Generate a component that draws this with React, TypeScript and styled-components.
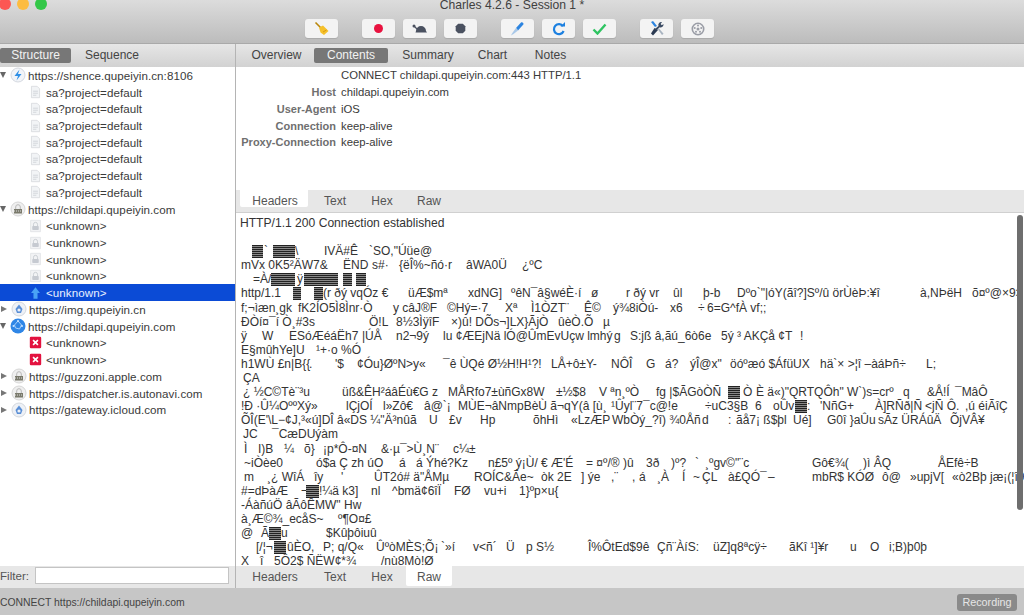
import React from "react";
import styled, { createGlobalStyle } from "styled-components";

const Global = createGlobalStyle`
  html, body { margin: 0; padding: 0; overflow: hidden; background: #fff; }
  body { font-family: "Liberation Sans", Arial, sans-serif; color: #333; }
  * { box-sizing: border-box; }
`;

const Page = styled.div`
  width: 1024px;
  height: 615px;
  display: flex;
  flex-direction: column;
  overflow: hidden;
`;
const Header = styled.header`
  height: 44px;
  flex: none;
  background: linear-gradient(#dcdcdc, #bcbcbc);
  border-bottom: 1px solid #a9a9a9;
  display: flex;
  flex-direction: column;
`;
const TitleRow = styled.div`
  height: 19px;
  display: grid;
  grid-template-columns: 1fr auto 1fr;
`;
const Lights = styled.div`
  display: flex;
  gap: 6px;
  margin: -2px 0 0 -1px;
`;
const Light = styled.span<{ $c: string }>`
  width: 12px;
  height: 12px;
  border-radius: 50%;
  background: ${(p) => p.$c};
`;
const Title = styled.div`
  font-size: 12.15px;
  line-height: 11px;
  color: #404040;
`;
const Toolbar = styled.div`
  display: flex;
  gap: 24px;
  padding-left: 305px;
`;
const ToolGroup = styled.div`
  display: flex;
  gap: 8px;
`;
const ToolButton = styled.div`
  width: 33px;
  height: 19px;
  border-radius: 3px;
  background: #f3f3f3;
  box-shadow: 0 1px 1px #aaa;
  display: flex;
  align-items: center;
  justify-content: center;
`;
const Main = styled.div`
  height: 544px;
  flex: none;
  display: flex;
`;
const LeftPane = styled.aside`
  width: 236px;
  flex: none;
  border-right: 1px solid #b4b4b4;
  display: flex;
  flex-direction: column;
`;
const RightPane = styled.section`
  flex: 1;
  min-width: 0;
  display: flex;
  flex-direction: column;
`;
const TabBar = styled.nav<{ $pad?: number }>`
  height: 23px;
  flex: none;
  background: linear-gradient(#e6e6e6, #d2d2d2);
  display: flex;
  align-items: flex-start;
  padding-left: ${(p) => p.$pad ?? 0}px;
  font-size: 12px;
`;
const Tab = styled.span<{ $w: number; $on?: boolean }>`
  width: ${(p) => p.$w}px;
  height: 15px;
  line-height: 15px;
  margin-top: 4px;
  text-align: center;
  border-radius: 2px;
  color: ${(p) => (p.$on ? "#f2f2f2" : "#444")};
  background: ${(p) => (p.$on ? "#777" : "transparent")};
`;
const Tree = styled.div`
  flex: 1;
  background: #fff;
  font-size: 11.6px;
  letter-spacing: 0.06px;
`;
const Row = styled.div<{ $child?: boolean; $sel?: boolean }>`
  height: 16.72px;
  display: flex;
  align-items: center;
  white-space: nowrap;
  color: ${(p) => (p.$sel ? "#e8f0ff" : "#3a3a3a")};
  background: ${(p) => (p.$sel ? "#0b4bd6" : "transparent")};
  padding-left: ${(p) => (p.$child ? 29 : 0)}px;
  gap: ${(p) => (p.$child ? 4 : 2)}px;
`;
const Arrow = styled.span<{ $open?: boolean }>`
  width: 0;
  height: 0;
  ${(p) =>
    p.$open
      ? `border-left:3.5px solid transparent;border-right:3.5px solid transparent;border-top:6px solid #666;margin-right:2px;`
      : `border-top:3.5px solid transparent;border-bottom:3.5px solid transparent;border-left:6px solid #777;margin-left:1px;margin-right:2px;`}
`;
const FilterRow = styled.div`
  height: 22px;
  flex: none;
  background: #e7e7e7;
  display: flex;
  align-items: center;
  gap: 6px;
  padding: 0 6px 4px 0;
  font-size: 11.6px;
  color: #555;
`;
const FilterInput = styled.div`
  flex: 1;
  height: 17px;
  background: #fff;
  border: 1px solid #c4c4c4;
`;
const Summary = styled.div`
  height: 123px;
  flex: none;
  padding: 0 0 0 4px;
  display: grid;
  grid-template-columns: 96px 1fr;
  grid-auto-rows: 16.72px;
  column-gap: 5px;
  align-items: center;
  font-size: 11.3px;
  color: #3a3a3a;
`;
const Key = styled.span`
  text-align: right;
  color: #6f6f6f;
  font-weight: 700;
  font-size: 11px;
  white-space: nowrap;
`;
const SubBar = styled.div`
  height: 22px;
  flex: none;
  background: #e7e7e7;
  display: flex;
  align-items: flex-start;
  padding-left: 4px;
  font-size: 12px;
  color: #555;
`;
const SubTab = styled.span<{ $w: number; $h?: number; $ml?: number; $pl?: number; $on?: boolean }>`
  width: ${(p) => p.$w}px;
  height: ${(p) => p.$h ?? 20}px;
  margin-left: ${(p) => p.$ml ?? 0}px;
  padding-left: ${(p) => p.$pl ?? 0}px;
  line-height: 22px;
  text-align: center;
  background: ${(p) => (p.$on ? "#fff" : "transparent")};
  border-radius: 0 0 2px 2px;
`;
const Body = styled.div`
  position: relative;
  flex: 1;
  min-height: 0;
  overflow: hidden;
  border-top: 1px solid #d0d0d0;
  padding-top: 3px;
  font-size: 12px;
  line-height: 14.1px;
  color: #333;
  white-space: pre;
`;
const Line = styled.div`
  height: 14.1px;
  display: flex;
`;
const Head = styled(Line)`
  font-size: 12.1px;
  padding-left: 4px;
`;
const Cell = styled.span<{ $w?: number }>`
  flex: none;
  ${(p) => (p.$w !== undefined ? `width: ${p.$w}px;` : "")}
`;
const Blot = styled.span<{ $w: number }>`
  display: block;
  width: ${(p) => p.$w}px;
  height: 13px;
  margin-top: 1px;
  background: repeating-linear-gradient(#222 0 1px, #888 1px 2px);
`;
const Thumb = styled.div`
  position: absolute;
  right: 1px;
  top: 2px;
  width: 6px;
  height: 295px;
  border-radius: 3px;
  background: #6e6e6e;
`;
const Status = styled.footer`
  flex: 1;
  background: #c6c6c6;
  display: flex;
  align-items: center;
  justify-content: space-between;
  padding: 1px 7px 0 0;
  font-size: 10.4px;
  color: #444;
`;
const Recording = styled.span`
  width: 60px;
  height: 17px;
  line-height: 17px;
  text-align: center;
  border-radius: 3px;
  background: #8a8a8a;
  color: #e6e6e6;
  font-size: 10.8px;
`;
const Svg: React.FC<{ w?: number; h?: number; children: React.ReactNode }> = ({ w = 16, h = 16, children }) => (
  <svg width={w} height={h} viewBox="0 0 16 16" style={{ flex: "none" }}>{children}</svg>
);
const Doc = () => (
  <Svg w={13} h={14}>
    <path d="M3 1h7l3 3v11H3z" fill="#f2f4f6" stroke="#d6d9dd" />
    <path d="M5 7h6M5 9.5h6M5 12h4" stroke="#cdd0d5" />
  </Svg>
);
const LockDoc = () => (
  <Svg w={13} h={14}>
    <path d="M2 1h12v14H2z" fill="#f2f3f5" stroke="#dfe1e4" />
    <path d="M5.5 8V6a2.5 2.5 0 0 1 5 0v2" fill="none" stroke="#c3c7cd" />
    <rect x="4" y="8" width="8" height="5" rx="1" fill="#c6cad1" />
  </Svg>
);
const LockGlobe = () => (
  <Svg>
    <circle cx="8" cy="8" r="7" fill="#efefef" stroke="#d6d6d6" />
    <path d="M5.7 8V6a2.3 2.3 0 0 1 4.6 0v2" fill="none" stroke="#b8b8b8" />
    <rect x="4" y="8" width="8" height="4.5" fill="#7a7a6c" />
    <path d="M4 10h8" stroke="#ddd" strokeDasharray="1 1" />
  </Svg>
);
const BlueLockGlobe = () => (
  <Svg>
    <circle cx="8" cy="8" r="7" fill="#eef1f6" stroke="#d4d8de" />
    <path d="M8 3.5 11.5 8 10 12H6L4.5 8z" fill="#5a8fd6" />
    <circle cx="8" cy="9" r="1.6" fill="#eef1f6" />
  </Svg>
);
const BoltGlobe = () => (
  <Svg>
    <circle cx="8" cy="8" r="7" fill="#f2f4f8" stroke="#d5d9e0" />
    <path d="M9.5 2.5 4.5 9H8l-1.5 4.5L11.5 7H8z" fill="#2e8fe6" />
  </Svg>
);
const Earth = () => (
  <Svg>
    <circle cx="8" cy="8" r="7.5" fill="#2f86e6" />
    <path d="M8 3l3.5 4-2 4-4-1-1-3z" fill="none" stroke="#a8d0fb" strokeWidth="1" />
    <circle cx="8" cy="3" r="1" fill="#cfe6ff" /><circle cx="3.5" cy="8" r="1" fill="#cfe6ff" /><circle cx="12" cy="8" r="1" fill="#cfe6ff" />
  </Svg>
);
const Fail = () => (
  <Svg w={13} h={13}>
    <rect x="1" y="1" width="14" height="14" rx="1.5" fill="#e3123f" />
    <path d="M5 5l6 6M11 5l-6 6" stroke="#fff" strokeWidth="2" />
  </Svg>
);
const Up = () => (
  <Svg w={13} h={14}>
    <path d="M8 1l5.5 7H10.5v7h-5V8H2.5z" fill="#4aa3f5" />
  </Svg>
);
const Broom = () => (
  <svg width="16" height="15" viewBox="0 0 16 15">
    <path d="M1.5 1.5 7 7" stroke="#b8860b" strokeWidth="1.6" />
    <path d="M5 6.5 9 4.5 14.5 10 10 14 6.5 11.5z" fill="#f5c02a" />
    <path d="M9 11l3.5-2" stroke="#d99a10" />
  </svg>
);
const RecordIcon = () => (
  <svg width="11" height="11" viewBox="0 0 11 11"><circle cx="5.5" cy="5.5" r="4.5" fill="#e8123f" /></svg>
);
const Turtle = () => (
  <svg width="17" height="11" viewBox="0 0 17 11">
    <path d="M5 8a5 5 0 0 1 10 0l1 1.5H4.5z" fill="#4a5160" />
    <circle cx="3" cy="3" r="1.5" fill="#4a5160" />
    <path d="M3 3 6 6" stroke="#4a5160" strokeWidth="1.2" />
  </svg>
);
const Stop = () => (
  <svg width="11" height="11" viewBox="0 0 11 11"><path d="M3.2 .7h4.6l2.5 2.5v4.6l-2.5 2.5H3.2L.7 7.8V3.2z" fill="#4a5160" /></svg>
);
const Pen = () => (
  <svg width="15" height="15" viewBox="0 0 15 15">
    <path d="M6 7 11 1.5c1-1 3.2 .4 2.3 2L8 9.5z" fill="#2c84e0" />
    <path d="M6 7 8 9.5 3.5 13 1 14.5 2.3 12z" fill="#a9c8e8" />
  </svg>
);
const Refresh = () => (
  <svg width="14" height="14" viewBox="0 0 14 14">
    <path d="M11 4.2A5 5 0 1 0 11.6 9" fill="none" stroke="#1c80e0" strokeWidth="2.2" />
    <path d="M8.5 4.5H13V0z" fill="#1c80e0" />
  </svg>
);
const Check = () => (
  <svg width="15" height="12" viewBox="0 0 15 12"><path d="M1.5 6.5 5.5 10.5 13.5 1.5" fill="none" stroke="#2fc462" strokeWidth="2.4" /></svg>
);
const Tools = () => (
  <svg width="16" height="15" viewBox="0 0 16 15">
    <path d="M2 1l4 5 2-1L4 0z" fill="#2c84e0" />
    <path d="M5.5 7 2 12.5 4 14.5 9 9z" fill="#2b3a52" />
    <path d="M13 1a3 3 0 0 0-3.5 4L6 8l1.5 1.5L10.6 6.3A3 3 0 0 0 14.5 3L12.8 4.2 11.6 3z" fill="#3a4a62" />
    <path d="M9 8.5l4 5.5 1.6-1.3L10 7.5z" fill="#a8b3c0" />
  </svg>
);
const Gear = () => (
  <svg width="14" height="14" viewBox="0 0 14 14">
    <circle cx="7" cy="7" r="5.7" fill="none" stroke="#9a9da6" strokeWidth="1.6" />
    <circle cx="7" cy="7" r="1.5" fill="#9a9da6" />
    {[0, 72, 144, 216, 288].map((a) => (
      <circle key={a} cx={7 + 3.4 * Math.sin((a * Math.PI) / 180)} cy={7 - 3.4 * Math.cos((a * Math.PI) / 180)} r="1" fill="#9a9da6" />
    ))}
  </svg>
);

const sa = "sa?project=default";
const unk = "<unknown>";

/* One dump line: [page x where the token starts, its text — or a number for the width of a garbled block]. */
type Tok = [number, string | number];
const dump: Tok[][] = [
  [],
  [[252, 11], [264, "`"], [273, 22], [295, "\\"], [324, "IVÄ#Ê"], [369, "`SO,\"Úüe@"]],
  [[241, "mVx 0K5²ÄW7&"], [343, "ËND"], [372, "s#·"], [399, "{ëÎ%~ñó·r"], [466, "âWA0Ü"], [522, "¿ºC"]],
  [[253, "=À/"], [271, 24], [297, "ÿ"], [304, 34], [343, 9], [356, 10]],
  [[241, "http/1.1"], [293, 8], [314, 9], [323, "(r ðý vqÓz €"], [408, "üÆ$mª"], [468, "xdNG]"], [511, "ºêN¯â§wéÈ·í"], [591, "ø"], [626, "r ðý vr"], [673, "ûl"], [703, "þ-b"], [737, "Dºo`\"|óY(ãî?]Sº/û örÙèÞ:¥î"], [920, "à,NÞëH"], [972, "õ¤º@×9>"]],
  [[241, "f;¬ìæn¸gk"], [298, "fK2ÍO5Ì8Ìnr·Ò"], [393, "y câJ®F"], [447, "©Hý=·7"], [505, "Xª"], [531, "Ì1ÒZT¨"], [584, "Ê©"], [613, "ý¾8iÒú-"], [670, "x6"], [698, "÷"], [707, "6=G^fÀ vf;;"]],
  [[241, "ÐÒí¤¯í Ò¸#3s"], [369, "Ö!L"], [396, "8½3ÌÿîF"], [451, "×)û! DÕs¬]LX}ÃjÒ"], [558, "ûèÒ.Õ"], [603, "µ"]],
  [[241, "ÿ"], [262, "W"], [289, "ESóÆéáËh7"], [362, "|ÚÅ"], [396, "n2¬9ý"], [443, "lu ¢ÆEjNä lÓ@ÛmEvUçw lmhý"], [614, "g"], [630, "S:jß â,ãú_6ò6e"], [721, "5ý ³ AKÇå ¢T"], [800, "!"]],
  [[241, "E§mûhYe]U"], [316, "¹+·o %Ó"]],
  [[241, "h1WÙ £n|B{{"], [309, "."], [335, "'$"], [357, "¢Óu}ØºN>y«"], [443, "¯ê ÙQé Ø½H!H¹?!"], [551, "LÅ+ô±Y-"], [611, "NÔÎ"], [646, "G"], [665, "á?"], [690, "ýÎ@x\""], [730, "öóºæó $ÁfüUX"], [820, "hä`× >¦î –àáÞñ÷"], [926, "L;"]],
  [[243, "ÇA"]],
  [[243, "¿ ½C©Tè¨³u"], [342, "üß&ÊH²áâÉù€G z"], [448, "MÅRfo7±ùñGx8W"], [556, "±½$8"], [599, "V ªn¸ºÒ"], [656, "fg |$ÃGòÒÑ"], [728, 12], [743, "Ò"], [756, "È ä«)\"QRTQÔh\" W`)s=crº"], [903, "q"], [927, "&Å!Í"], [955, "¯MâÔ"]],
  [[241, "!Ð ·Û¼OººXý»"], [346, "lÇjOÍ"], [383, "l»Zô€"], [424, "â@`¡"], [458, "MÙE¬âNmpBèÙ ã¬qY(â [ù¸"], [611, "¹Ûyl¨7¯c@!e"], [705, "÷uC3§B"], [755, "6"], [773, "oÛv"], [795, 12], [807, ":"], [820, "'NñG+"], [875, "À]RÑð|Ñ"], [925, "<jÑ Ô."], [965, ",ú éiÃîÇ"]],
  [[241, "ÕÎ(E'\\L−¢J,³«ú]DÎ â«DS ¼\"Ä³nûã"], [429, "U"], [449, "£v"], [480, "Hp"], [533, "õhHì"], [571, "«LzÆP"], [612, "WbÒý_?î) ¾0Åñ"], [702, "d"], [728, ":"], [736, "ãå7¡ ß$þl"], [793, "Ué]"], [827, "G0î }aÛu"], [878, "sÃz ÜRÁûÄ"], [950, "ÕjVÂ¥"]],
  [[243, "JC"], [272, "¯CæDUýàm"]],
  [[244, "Ì"], [258, "I)B"], [284, "¼"], [304, "õ}"], [323, "¡p*Ô-¤N"], [381, "&·µ¯>Ù¸N¨"], [453, "c¼±"]],
  [[244, "~iÒèe0"], [316, "ó$a Ç zh úO"], [399, "á"], [416, "á Ýhé?Kz"], [488, "n£5º ý¡Ù/ € Æ'É"], [586, "= ¤º/® )û"], [646, "3ð"], [671, ")º?"], [695, "`"], [705, "¸ºgv©\"¨c"], [812, "Gô€¾("], [863, ")ì ÂQ"], [938, "ÅEfê÷B"]],
  [[244, "m"], [267, "¸¿ WîÁ"], [314, "îy"], [341, "'"], [374, "ÛT2ó# ä\"ÅMµ"], [474, "ROÍC&Ãe~"], [541, "òk 2E"], [581, "] ýe"], [611, ",¨"], [632, ","], [639, "á"], [657, "¸À"], [682, "Í"], [693, "~"], [702, "ÇL"], [728, "à£QÓ¯"], [768, "–"], [812, "mbR$ KÓØ"], [882, "ô@"], [910, "»upjV["], [952, "«ò2Bþ jæ¡(¦î9"]],
  [[241, "#=dÞàÆ"], [301, "¬"], [306, 13], [319, "!¼ä k3]"], [371, "nl"], [392, "^bmä¢6îÏ"], [454, "FØ"], [484, "vu+i"], [519, "1}ºp×u{"]],
  [[241, "-ÁàñúÖ âÃôÊMW\" Hw"]],
  [[241, "à¸Æ©¾_ecåS~"], [338, "º¶O¤£"]],
  [[241, "@"], [261, "Ã"], [269, 12], [281, "u"], [326, "$Kûþôiuû"]],
  [[256, "[/¦¬"], [274, 12], [287, "ûÈO,"], [323, "P; q/Q«"], [376, "ÛºòMÈS;Õ¡"], [441, "`»í"], [473, "v<ñ´"], [506, "Ü"], [526, "p S½"], [588, "Î%ÔtEd$9ê"], [657, "Çñ¨ÀíS:"], [713, "üZ]q8ªcÿ÷"], [789, "ãKî ¹]¥r"], [850, "u"], [870, "O"], [889, "i;B)þ0þ"]],
  [[241, "X"], [260, "î"], [274, "5Ô2$ ÑËW¢*¾"], [381, "/nù8Mò!Ø"]],
];

const PANE_X = 236;

const DumpLine: React.FC<{ tokens: Tok[] }> = ({ tokens }) => (
  <Line>
    {tokens.length > 0 && <Cell $w={tokens[0][0] - PANE_X} />}
    {tokens.map(([x, v], i) => {
      const next = tokens[i + 1];
      return (
        <Cell key={i} $w={next ? next[0] - x : undefined}>
          {typeof v === "number" ? <Blot $w={v} /> : v}
        </Cell>
      );
    })}
  </Line>
);

export default function App() {
  return (
    <Page>
      <Global />
      <Header>
        <TitleRow>
          <Lights>
            <Light $c="#fc5753" />
            <Light $c="#fdbc40" />
            <Light $c="#33c748" />
          </Lights>
          <Title>Charles 4.2.6 - Session 1 *</Title>
        </TitleRow>
        <Toolbar>
          <ToolGroup>
            <ToolButton><Broom /></ToolButton>
          </ToolGroup>
          <ToolGroup>
            <ToolButton><RecordIcon /></ToolButton>
            <ToolButton><Turtle /></ToolButton>
            <ToolButton><Stop /></ToolButton>
          </ToolGroup>
          <ToolGroup>
            <ToolButton><Pen /></ToolButton>
            <ToolButton><Refresh /></ToolButton>
            <ToolButton><Check /></ToolButton>
          </ToolGroup>
          <ToolGroup>
            <ToolButton><Tools /></ToolButton>
            <ToolButton><Gear /></ToolButton>
          </ToolGroup>
        </Toolbar>
      </Header>
      <Main>
        <LeftPane>
          <TabBar>
            <Tab $w={71} $on>Structure</Tab>
            <Tab $w={82}>Sequence</Tab>
          </TabBar>
          <Tree>
            <Row><Arrow $open /><BoltGlobe />https://shence.qupeiyin.cn:8106</Row>
            {[0, 1, 2, 3, 4, 5, 6].map((i) => (
              <Row $child key={i}><Doc />{sa}</Row>
            ))}
            <Row><Arrow $open /><LockGlobe />https://childapi.qupeiyin.com</Row>
            {[0, 1, 2, 3].map((i) => (
              <Row $child key={i}><LockDoc />{unk}</Row>
            ))}
            <Row $child $sel><Up />{unk}</Row>
            <Row><Arrow /><BlueLockGlobe />https://img.qupeiyin.cn</Row>
            <Row><Arrow $open /><Earth />https://childapi.qupeiyin.com</Row>
            <Row $child><Fail />{unk}</Row>
            <Row $child><Fail />{unk}</Row>
            <Row><Arrow /><LockGlobe />https://guzzoni.apple.com</Row>
            <Row><Arrow /><LockGlobe />https://dispatcher.is.autonavi.com</Row>
            <Row><Arrow /><BlueLockGlobe />https://gateway.icloud.com</Row>
          </Tree>
          <FilterRow>Filter:<FilterInput /></FilterRow>
        </LeftPane>
        <RightPane>
          <TabBar $pad={3}>
            <Tab $w={75}>Overview</Tab>
            <Tab $w={74} $on>Contents</Tab>
            <Tab $w={80}>Summary</Tab>
            <Tab $w={49}>Chart</Tab>
            <Tab $w={67}>Notes</Tab>
          </TabBar>
          <Summary>
            <Key />
            <span>CONNECT childapi.qupeiyin.com:443 HTTP/1.1</span>
            <Key>Host</Key>
            <span>childapi.qupeiyin.com</span>
            <Key>User-Agent</Key>
            <span>iOS</span>
            <Key>Connection</Key>
            <span>keep-alive</span>
            <Key>Proxy-Connection</Key>
            <span>keep-alive</span>
          </Summary>
          <SubBar>
            <SubTab $w={68} $h={17} $pl={2} $on>Headers</SubTab>
            <SubTab $w={54}>Text</SubTab>
            <SubTab $w={40}>Hex</SubTab>
            <SubTab $w={46} $ml={4}>Raw</SubTab>
          </SubBar>
          <Body>
            <Head>HTTP/1.1 200 Connection established</Head>
            {dump.map((t, i) => (
              <DumpLine key={i} tokens={t} />
            ))}
            <Thumb />
          </Body>
          <SubBar>
            <SubTab $w={68} $pl={2}>Headers</SubTab>
            <SubTab $w={54}>Text</SubTab>
            <SubTab $w={40}>Hex</SubTab>
            <SubTab $w={46} $ml={4} $on>Raw</SubTab>
          </SubBar>
        </RightPane>
      </Main>
      <Status>
        CONNECT https://childapi.qupeiyin.com
        <Recording>Recording</Recording>
      </Status>
    </Page>
  );
}
